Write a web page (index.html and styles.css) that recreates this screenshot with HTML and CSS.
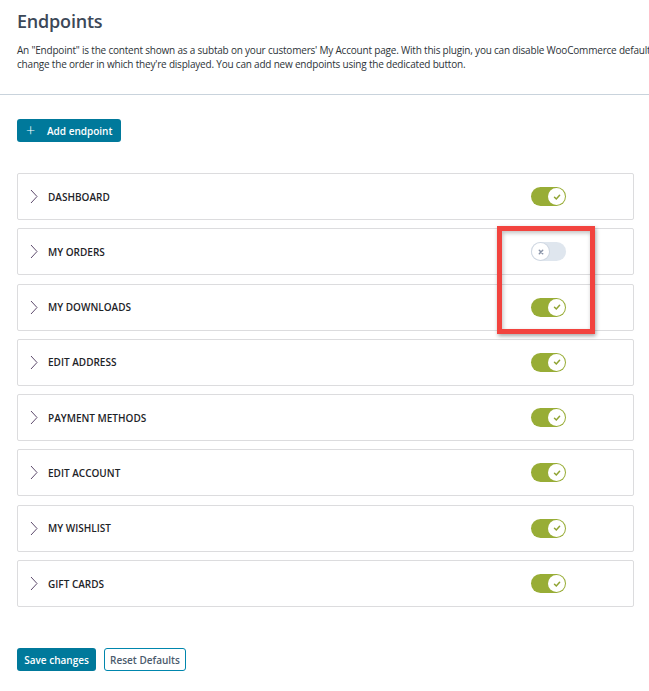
FILE: index.html
```html
<!DOCTYPE html>
<html>
<head>
<meta charset="utf-8">
<link rel="stylesheet" href="styles.css">
</head>
<body>
<div class="page">
  <header class="head">
    <h1 class="title">Endpoints</h1>
    <p class="desc">An "Endpoint" is the content shown as a subtab on your customers' My Account page. With this plugin, you can disable WooCommerce default endpoints and<br>change the order in which they're displayed. You can add new endpoints using the dedicated button.</p>
  </header>
  <div class="content">
    <button class="btn btn-add"><span class="plus">+</span>Add endpoint</button>
    <div class="list">
      <div class="row"><svg class="chev" viewBox="0 0 8 14"><path d="M1 0.5 L7 7 L1 13.5"/></svg><span class="label">DASHBOARD</span><span class="toggle on"><span class="knob"><svg viewBox="0 0 10 10"><path d="M2.5 5.2 L4.3 7 L7.6 3.2"/></svg></span></span></div>
      <div class="row"><svg class="chev" viewBox="0 0 8 14"><path d="M1 0.5 L7 7 L1 13.5"/></svg><span class="label">MY ORDERS</span><span class="toggle off"><span class="knob"><svg viewBox="0 0 10 10"><path d="M3.3 3.3 L6.7 6.7 M6.7 3.3 L3.3 6.7"/></svg></span></span></div>
      <div class="row"><svg class="chev" viewBox="0 0 8 14"><path d="M1 0.5 L7 7 L1 13.5"/></svg><span class="label">MY DOWNLOADS</span><span class="toggle on"><span class="knob"><svg viewBox="0 0 10 10"><path d="M2.5 5.2 L4.3 7 L7.6 3.2"/></svg></span></span></div>
      <div class="row"><svg class="chev" viewBox="0 0 8 14"><path d="M1 0.5 L7 7 L1 13.5"/></svg><span class="label">EDIT ADDRESS</span><span class="toggle on"><span class="knob"><svg viewBox="0 0 10 10"><path d="M2.5 5.2 L4.3 7 L7.6 3.2"/></svg></span></span></div>
      <div class="row"><svg class="chev" viewBox="0 0 8 14"><path d="M1 0.5 L7 7 L1 13.5"/></svg><span class="label">PAYMENT METHODS</span><span class="toggle on"><span class="knob"><svg viewBox="0 0 10 10"><path d="M2.5 5.2 L4.3 7 L7.6 3.2"/></svg></span></span></div>
      <div class="row"><svg class="chev" viewBox="0 0 8 14"><path d="M1 0.5 L7 7 L1 13.5"/></svg><span class="label">EDIT ACCOUNT</span><span class="toggle on"><span class="knob"><svg viewBox="0 0 10 10"><path d="M2.5 5.2 L4.3 7 L7.6 3.2"/></svg></span></span></div>
      <div class="row"><svg class="chev" viewBox="0 0 8 14"><path d="M1 0.5 L7 7 L1 13.5"/></svg><span class="label">MY WISHLIST</span><span class="toggle on"><span class="knob"><svg viewBox="0 0 10 10"><path d="M2.5 5.2 L4.3 7 L7.6 3.2"/></svg></span></span></div>
      <div class="row"><svg class="chev" viewBox="0 0 8 14"><path d="M1 0.5 L7 7 L1 13.5"/></svg><span class="label">GIFT CARDS</span><span class="toggle on"><span class="knob"><svg viewBox="0 0 10 10"><path d="M2.5 5.2 L4.3 7 L7.6 3.2"/></svg></span></span></div>
      <div class="highlight"></div>
    </div>
    <div class="actions">
      <button class="btn btn-save">Save changes</button>
      <button class="btn btn-reset">Reset Defaults</button>
    </div>
  </div>
</div>
</body>
</html>
```

FILE: styles.css
```css
html, body {
  margin: 0;
  padding: 0;
  background: #fff;
  overflow: hidden;
}
body {
  font-family: "Open Sans", "Noto Sans", sans-serif;
  color: #1d2327;
}
.page {
  width: 649px;
}
.head {
  padding: 9px 0 0 17px;
  border-bottom: 1px solid #c9d3dc;
  box-sizing: border-box;
  height: 95px;
}
.title {
  margin: 0;
  font-size: 18px;
  font-weight: 600;
  color: #3c4858;
  line-height: 24px;
  letter-spacing: -0.2px;
}
.desc {
  margin: 10px 0 0;
  font-size: 10px;
  line-height: 14px;
  color: #2d3338;
  white-space: nowrap;
  letter-spacing: -0.2px;
}
.content {
  padding: 24px 15px 0 17px;
}
.btn {
  font-family: "Open Sans", "Noto Sans", sans-serif;
  border-radius: 3px;
  cursor: pointer;
  box-sizing: border-box;
}
.btn-add {
  display: flex;
  align-items: center;
  width: 104px;
  height: 23px;
  padding: 0 0 0 9px;
  background: #00799b;
  border: none;
  color: #fff;
  font-size: 10px;
  font-weight: 600;
}
.plus {
  font-size: 16px;
  font-weight: 300;
  width: 21px;
  text-align: left;
  line-height: 16px;
  margin-top: -2px;
}
.list {
  position: relative;
  margin-top: 31px;
  display: flex;
  flex-direction: column;
  gap: 8.3px;
}
.row {
  height: 47px;
  box-sizing: border-box;
  border: 1px solid #dcdcde;
  border-radius: 2px;
  display: flex;
  align-items: center;
  padding-left: 12px;
}
.chev {
  width: 8px;
  height: 15px;
  fill: none;
  stroke: #5d4a6c;
  stroke-width: 1;
}
.label {
  margin-left: 10px;
  font-size: 10px;
  font-weight: 600;
  color: #1d2327;
  letter-spacing: 0;
  flex: 1;
}
.toggle {
  width: 35px;
  height: 19px;
  border-radius: 10px;
  margin-right: 67px;
  display: flex;
  align-items: center;
  box-sizing: border-box;
}
.toggle.on {
  background: #98ad36;
  justify-content: flex-end;
  padding-right: 1px;
}
.toggle.off {
  background: #dfe6ee;
  justify-content: flex-start;
  padding-left: 1px;
}
.knob {
  width: 17px;
  height: 17px;
  border-radius: 50%;
  background: #fff;
  display: flex;
  align-items: center;
  justify-content: center;
}
.toggle.off .knob {
  box-shadow: 0 0 0 1px #d0d8e2;
}
.knob svg {
  width: 10px;
  height: 10px;
  fill: none;
  stroke-width: 1.5;
  stroke-linecap: round;
}
.toggle.on .knob svg { stroke: #8fa331; }
.toggle.off .knob svg { stroke: #8a94a8; }
.highlight {
  position: absolute;
  left: 480px;
  top: 53px;
  width: 98px;
  height: 108px;
  box-sizing: border-box;
  border: 5px solid #f2433e;
  box-shadow: 1px 2px 4px rgba(0,0,0,0.35), inset 1px 2px 4px rgba(0,0,0,0.25);
}
.actions {
  margin-top: 41px;
  display: flex;
  gap: 8px;
}
.btn-save {
  width: 79px;
  height: 23px;
  background: #00799b;
  border: none;
  color: #fff;
  font-size: 10px;
  font-weight: 600;
  padding: 0;
}
.btn-reset {
  width: 82px;
  height: 23px;
  background: #fff;
  border: 1px solid #0086ad;
  color: #4b5b6d;
  font-size: 10px;
  font-weight: 600;
  padding: 0;
}
```
